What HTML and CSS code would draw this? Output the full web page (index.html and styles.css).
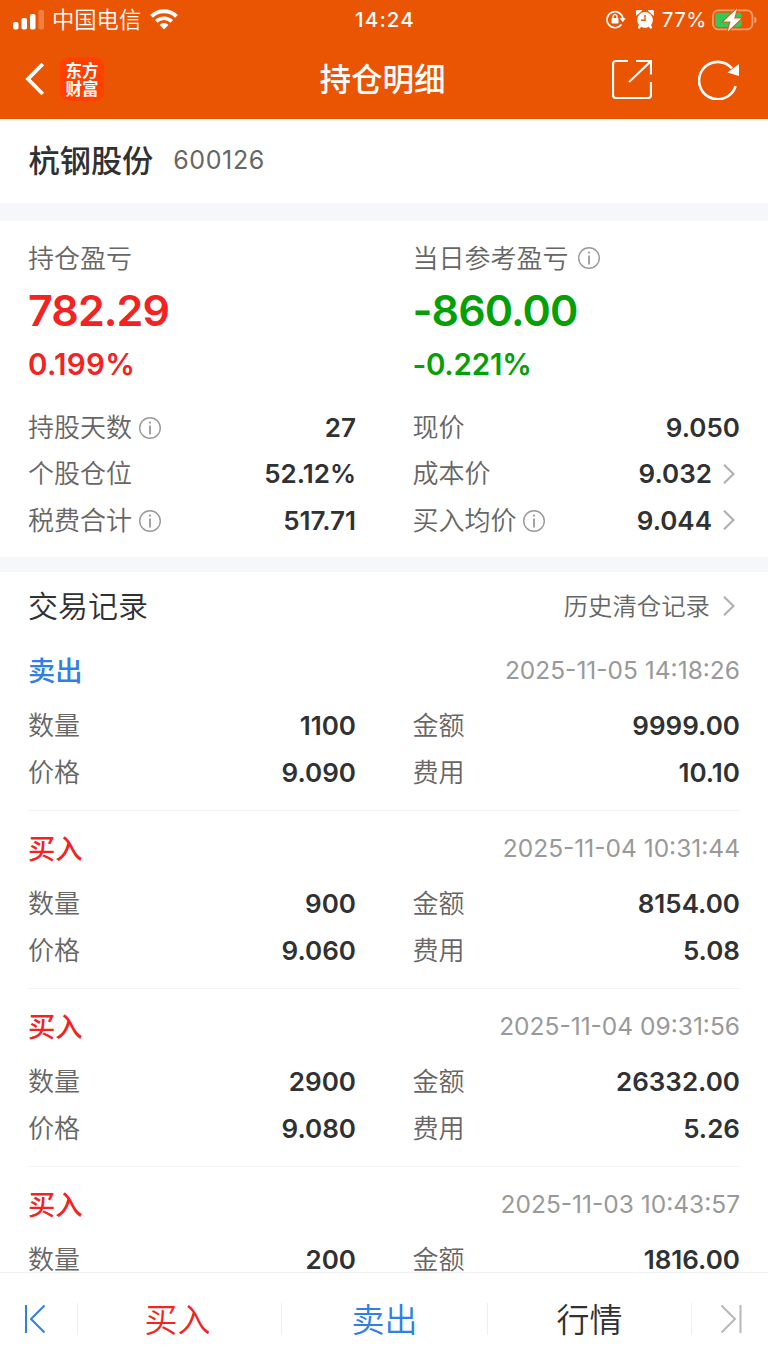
FILE: index.html
```html
<!DOCTYPE html>
<html lang="zh-CN">
<head>
<meta charset="utf-8">
<title>持仓明细</title>
<link rel="stylesheet" href="styles.css">
</head>
<body>
<svg width="0" height="0" class="defs">
  <symbol id="info" viewBox="0 0 24 24"><circle cx="12" cy="12" r="10.3" fill="none" stroke="#999" stroke-width="1.4"/><circle cx="12" cy="6.6" r="1.1" fill="#999"/><path d="M12 9.5v9" stroke="#999" stroke-width="1.8"/></symbol>
  <symbol id="chev" viewBox="0 0 12 20"><path d="M1 .8l9.5 9.2L1 19.2" fill="none" stroke="#b0b0b0" stroke-width="2.2"/></symbol>
</svg>
<header class="top">
  <div class="status">
    <div class="carrier">
      <svg width="32" height="20" viewBox="0 0 32 20" fill="#fff"><rect x="0" y="12" width="5.5" height="7.5" rx="1.8"/><rect x="8.5" y="8" width="5.5" height="11.5" rx="1.8"/><rect x="17" y="4" width="5.5" height="15.5" rx="1.8"/><rect x="25.5" y="0" width="5.5" height="19.5" rx="1.8" opacity=".25"/></svg>
      <span class="carrier-name">中国电信</span>
      <svg width="28" height="21" viewBox="0 0 28 21" fill="none" stroke="#fff"><path d="M1.5 7.4a18 18 0 0 1 25 0" stroke-width="4"/><path d="M6.2 12.4a11.4 11.4 0 0 1 15.6 0" stroke-width="3.6"/><path d="M14 20.5l-4.4-4.6a6.2 6.2 0 0 1 8.8 0z" fill="#fff" stroke="none"/></svg>
    </div>
    <time class="clock">14:24</time>
    <div class="power">
      <svg width="20" height="19" viewBox="0 0 20 19" fill="none" stroke="#fff" stroke-width="1.7"><path d="M15.4 14.6A8 8 0 1 1 17 9"/><path d="M13.6 8.2h6.2l-3.1 4z" fill="#fff" stroke="none"/><rect x="5.5" y="8" width="7" height="5.6" rx=".8" fill="#fff" stroke="none"/><path d="M7 8V6.7a2 2 0 0 1 4 0V8" stroke-width="1.3"/></svg>
      <svg class="alarm" width="18" height="19" viewBox="0 0 18 19"><g fill="#fff"><circle cx="9" cy="10" r="7.9"/><path d="M.3 5.8A3.8 3.8 0 0 1 6.2.8zM17.7 5.8A3.8 3.8 0 0 0 11.8.8zM3 14.5l2.4 2-2 2.4-1.6-1.2zM15 14.5l-2.4 2 2 2.4 1.6-1.2z"/></g><path d="M9 5v5.2H5" fill="none" stroke="#ea5504" stroke-width="1.4"/></svg>
      <span class="pct">77%</span>
      <svg width="45" height="24" viewBox="0 0 45 24"><rect x=".9" y="2.4" width="39.5" height="19" rx="5.5" fill="none" stroke="#fff" stroke-opacity=".42" stroke-width="1.8"/><path d="M42.3 8.5a3.8 3.8 0 0 1 0 7z" fill="#fff" fill-opacity=".45"/><rect x="3.2" y="4.8" width="26.5" height="14.2" rx="3" fill="#34c759"/><path d="M25 .5L11.5 13.6h7.1L15.7 23.5 29.1 10.4h-6.9z" fill="#fff" stroke="#ea5504" stroke-width="2" paint-order="stroke"/></svg>
    </div>
  </div>
  <nav class="bar">
    <div class="left">
      <svg width="20" height="34" viewBox="0 0 20 34"><path d="M17.8 2L3 17l14.8 15" fill="none" stroke="#fff" stroke-width="3.8"/></svg>
      <div class="logo"><span>东方</span><span>财富</span></div>
    </div>
    <h1>持仓明细</h1>
    <div class="actions">
      <svg width="40" height="40" viewBox="0 0 40 40" fill="none" stroke="#fff" stroke-width="2.2"><path d="M16 2H4a3 3 0 0 0-3 3v31a3 3 0 0 0 3 3h32a3 3 0 0 0 3-3V23M24 2h15v13.5M38.5 2.5L17 23"/></svg>
      <svg width="42" height="41" viewBox="0 0 42 41"><path d="M37.6 27.2A18.7 18.7 0 1 1 34 9.4" fill="none" stroke="#fff" stroke-width="2.6"/><path d="M41 5V17L29.5 13.6z" fill="#fff"/></svg>
    </div>
  </nav>
</header>
<section class="stock"><h2>杭钢股份</h2><span>600126</span></section>
<section class="summary">
  <div class="col up">
    <div class="label"><span>持仓盈亏</span></div>
    <div class="big">782.29</div>
    <div class="rate">0.199%</div>
    <div class="row first"><span>持股天数</span><svg class="info"><use href="#info"/></svg><b>27</b></div>
    <div class="row"><span>个股仓位</span><b>52.12%</b></div>
    <div class="row"><span>税费合计</span><svg class="info"><use href="#info"/></svg><b>517.71</b></div>
  </div>
  <div class="col down">
    <div class="label"><span>当日参考盈亏</span><svg class="info wide"><use href="#info"/></svg></div>
    <div class="big">-860.00</div>
    <div class="rate">-0.221%</div>
    <div class="row first"><span>现价</span><b>9.050</b></div>
    <div class="row"><span>成本价</span><b>9.032</b><svg class="chev"><use href="#chev"/></svg></div>
    <div class="row"><span>买入均价</span><svg class="info"><use href="#info"/></svg><b>9.044</b><svg class="chev"><use href="#chev"/></svg></div>
  </div>
</section>
<main class="records">
  <div class="heading"><h3>交易记录</h3><span class="history">历史清仓记录</span><svg class="chev"><use href="#chev"/></svg></div>
  <article class="trade">
    <div class="title"><strong class="sell">卖出</strong><time>2025-11-05 14:18:26</time></div>
    <div class="pair"><div class="row"><span>数量</span><b>1100</b></div><div class="row"><span>金额</span><b>9999.00</b></div></div>
    <div class="pair"><div class="row"><span>价格</span><b>9.090</b></div><div class="row"><span>费用</span><b>10.10</b></div></div>
  </article>
  <article class="trade">
    <div class="title"><strong class="buy">买入</strong><time>2025-11-04 10:31:44</time></div>
    <div class="pair"><div class="row"><span>数量</span><b>900</b></div><div class="row"><span>金额</span><b>8154.00</b></div></div>
    <div class="pair"><div class="row"><span>价格</span><b>9.060</b></div><div class="row"><span>费用</span><b>5.08</b></div></div>
  </article>
  <article class="trade">
    <div class="title"><strong class="buy">买入</strong><time>2025-11-04 09:31:56</time></div>
    <div class="pair"><div class="row"><span>数量</span><b>2900</b></div><div class="row"><span>金额</span><b>26332.00</b></div></div>
    <div class="pair"><div class="row"><span>价格</span><b>9.080</b></div><div class="row"><span>费用</span><b>5.26</b></div></div>
  </article>
  <article class="trade">
    <div class="title"><strong class="buy">买入</strong><time>2025-11-03 10:43:57</time></div>
    <div class="pair"><div class="row"><span>数量</span><b>200</b></div><div class="row"><span>金额</span><b>1816.00</b></div></div>
  </article>
</main>
<footer class="tabs">
  <div class="edge start"><svg width="22" height="30" viewBox="0 0 22 30" fill="none" stroke="#2f7fe6" stroke-width="2"><path d="M2 1v28M20.5 1.5L7 15l13.5 13.5"/></svg></div>
  <div class="tab buy">买入</div>
  <div class="tab sell">卖出</div>
  <div class="tab">行情</div>
  <div class="edge end"><svg width="22" height="30" viewBox="0 0 22 30" fill="none" stroke="#b8b8b8" stroke-width="2"><path d="M20.5 1v28M1.5 1.5L15 15 1.5 28.5"/></svg></div>
</footer>
</body>
</html>
```
FILE: styles.css
```css
* { box-sizing: border-box; margin: 0; padding: 0; }
body {
  width: 768px; height: 1366px; overflow: hidden;
  display: flex; flex-direction: column;
  background: #fff; color: #303133;
  font-family: Inter, "Noto Sans CJK SC", sans-serif;
}
svg { display: block; flex: none; }
.defs { position: absolute; }

.top { height: 119px; flex: none; background: #ea5504; color: #fff; }
.status { height: 39px; display: grid; grid-template-columns: 1fr auto 1fr; align-items: center; padding: 0 11px 0 13px; }
.carrier, .power { display: flex; align-items: center; }
.carrier-name { font-size: 22.3px; line-height: 30px; margin: 0 9px 0 7px; font-weight: 350; padding-top: 1px; }
.clock { font-size: 20.5px; font-weight: 500; letter-spacing: 1.2px; }
.power { justify-content: flex-end; }
.alarm { margin: 0 8px 0 10px; }
.pct { font-size: 20.5px; letter-spacing: .5px; margin-right: 5px; }
.bar { height: 80px; display: grid; grid-template-columns: 1fr auto 1fr; align-items: center; padding: 0 28px 0 25px; }
.left { display: flex; align-items: center; gap: 15px; }
.logo {
  width: 44px; height: 44px; border-radius: 9px; background: #ff4000;
  display: flex; flex-direction: column; align-items: center; justify-content: center;
  font: 700 16.5px/18px "Noto Sans CJK SC", sans-serif;
}
.bar h1 { font-size: 31.5px; line-height: 40px; font-weight: 500; padding-top: 2px; }
.actions { display: flex; justify-content: flex-end; gap: 46px; align-items: center; }

.stock { height: 84px; flex: none; display: flex; align-items: center; padding: 0 29px 2px 28.5px; }
.stock h2 { font-size: 31.2px; line-height: 40px; font-weight: 500; padding-top: 1px; }
.stock span { margin-left: 20px; font-size: 25px; letter-spacing: .6px; color: #666; }

.summary {
  height: 369px; flex: none; padding: 14px 28px 0; border-top: 18px solid #f6f7fa; border-bottom: 15px solid #f6f7fa;
  display: grid; grid-template-columns: 328px 327.6px; gap: 56.4px;
}
.label { height: 46px; display: flex; align-items: center; font-size: 26px; }
.label span, .row span { font-weight: 350; color: #666; line-height: 36px; padding-top: 1px; }
.info { width: 24px; height: 24px; margin: 1px 0 0 6px; }
.info.wide { margin: 0 0 0 9px; }
.big { height: 58px; line-height: 58px; font-size: 43px; font-weight: 600; letter-spacing: -.9px; }
.rate { height: 50px; line-height: 51px; font-size: 29.5px; font-weight: 600; letter-spacing: .3px; }
.up .big, .up .rate, .buy { color: #f52222; }
.down .big, .down .rate { color: #05a005; }
.down .rate { letter-spacing: -.2px; }
.row { height: 46.5px; display: flex; align-items: center; font-size: 26px; }
.row.first { margin-top: 15px; }
.row b { margin-left: auto; font-weight: 600; }
.chev { width: 12px; height: 20px; margin: 0 5px 0 11px; }

.records { flex: 1; min-height: 0; overflow: hidden; padding: 0 28px; }
.heading { height: 61px; padding-top: 7px; display: flex; align-items: center; }
.heading h3 { font-size: 30px; line-height: 40px; font-weight: 350; }
.history { margin-left: auto; font-size: 24.4px; font-weight: 350; color: #666; line-height: 36px; padding-bottom: 1px; }
.heading .chev { margin-left: 13px; }
.trade { height: 178px; padding-top: 7px; border-bottom: 1px solid #f4f4f4; }
.title { height: 60px; margin-bottom: 2.5px; display: flex; align-items: center; justify-content: space-between; }
.title strong { font-size: 27.3px; line-height: 40px; font-weight: 500; padding-top: 3px; }
.title time { font-size: 24.5px; color: #999; }
.sell { color: #2f7fe6; }
.pair { display: grid; grid-template-columns: 328px 327.6px; gap: 56.4px; }

.tabs { height: 94px; flex: none; border-top: 1px solid #f2f2f2; padding-top: 30px; display: grid; grid-template-columns: 77px 204px 206px 204px 77px; align-items: start; }
.tabs > div { height: 32px; display: flex; align-items: center; }
.start { padding-left: 24px; }
.end { justify-content: flex-end; padding-right: 26px; }
.tab { justify-content: center; font-size: 33px; font-weight: 350; line-height: 44px; padding-top: 1px; }
.tab.buy { padding-right: 4px; }
.tab, .end { border-left: 1px solid #eee; }
```
